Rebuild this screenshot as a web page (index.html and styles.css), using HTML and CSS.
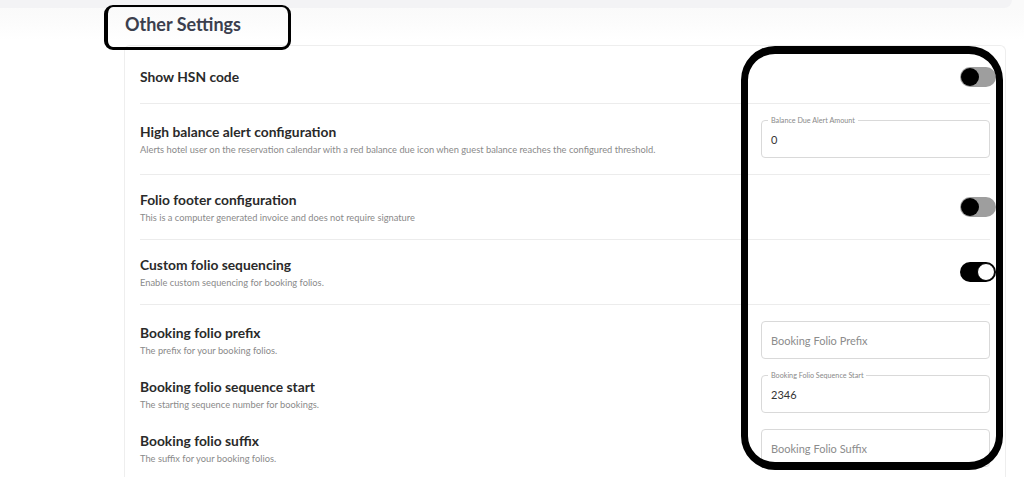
FILE: index.html
```html
<!DOCTYPE html>
<html lang="en">
<head>
<meta charset="utf-8">
<title>Other Settings</title>
<link rel="stylesheet" href="styles.css">
</head>
<body>
<div class="topbar"></div>
<main class="page">
  <h2 class="heading">Other Settings</h2>
  <section class="card">
    <div class="row row-first">
      <div class="text">
        <div class="label">Show HSN code</div>
      </div>
      <div class="switch"><span class="knob"></span></div>
    </div>
    <div class="row">
      <div class="text">
        <div class="label">High balance alert configuration</div>
        <div class="desc">Alerts hotel user on the reservation calendar with a red balance due icon when guest balance reaches the configured threshold.</div>
      </div>
      <div class="field"><span class="legend">Balance Due Alert Amount</span><span class="value">0</span></div>
    </div>
    <div class="row">
      <div class="text">
        <div class="label">Folio footer configuration</div>
        <div class="desc">This is a computer generated invoice and does not require signature</div>
      </div>
      <div class="switch"><span class="knob"></span></div>
    </div>
    <div class="row">
      <div class="text">
        <div class="label">Custom folio sequencing</div>
        <div class="desc">Enable custom sequencing for booking folios.</div>
      </div>
      <div class="switch switch-on"><span class="knob"></span></div>
    </div>
    <div class="group">
      <div class="row row-plain">
        <div class="text">
          <div class="label">Booking folio prefix</div>
          <div class="desc">The prefix for your booking folios.</div>
        </div>
        <div class="field"><span class="placeholder">Booking Folio Prefix</span></div>
      </div>
      <div class="row row-plain">
        <div class="text">
          <div class="label">Booking folio sequence start</div>
          <div class="desc">The starting sequence number for bookings.</div>
        </div>
        <div class="field"><span class="legend">Booking Folio Sequence Start</span><span class="value">2346</span></div>
      </div>
      <div class="row row-plain">
        <div class="text">
          <div class="label">Booking folio suffix</div>
          <div class="desc">The suffix for your booking folios.</div>
        </div>
        <div class="field"><span class="placeholder">Booking Folio Suffix</span></div>
      </div>
    </div>
  </section>
</main>
<div class="note note-head"></div>
<div class="note note-controls"></div>
</body>
</html>
```

FILE: styles.css
```css
* { box-sizing: border-box; }
html, body { margin: 0; padding: 0; }
body {
  font-family: Lato, "Noto Sans", sans-serif;
  background: linear-gradient(#fafafa 8px, #fcfcfc 24px, #ffffff 40px);
  color: #2a2a2a;
  height: 477px;
  overflow: hidden;
  position: relative;
}
.topbar {
  height: 8px;
  width: calc(100% - 12px);
  background: #f3f3f5;
  border-bottom-right-radius: 14px;
}
.page {
  padding: 0 18px 0 124px;
}
.heading {
  margin: 5px 0 10px 1px;
  font-size: 18px;
  line-height: 22px;
  font-weight: 700;
  color: #3b3f4e;
}
.card {
  border: 1px solid #eeeeee;
  border-bottom: 0;
  border-radius: 6px 6px 0 0;
  padding: 0 15px 40px 15px;
  background: #fff;
}
.row {
  display: flex;
  align-items: center;
  justify-content: space-between;
  padding: 16px 0;
  border-bottom: 1px solid #ececec;
}
.row-first { padding-top: 21px; }
.row-plain { border-bottom: 0; padding: 0; }
.group {
  display: flex;
  flex-direction: column;
  gap: 16px;
  padding-top: 16px;
}
.text { display: flex; flex-direction: column; }
.label {
  font-size: 13.8px;
  line-height: 18px;
  font-weight: 700;
  color: #2a2a2a;
}
.desc {
  margin-top: 3px;
  font-size: 9.3px;
  line-height: 11px;
  color: #8a8a8a;
}
.switch {
  flex: none;
  width: 36px;
  height: 20px;
  border-radius: 10px;
  background: #9e9e9e;
  display: flex;
  align-items: center;
  padding: 1px;
  margin-right: -6px;
}
.knob {
  width: 18px;
  height: 18px;
  border-radius: 50%;
  background: #000;
}
.switch-on {
  background: #000;
  justify-content: flex-end;
  padding: 1px;
}
.switch-on .knob {
  width: 18px;
  height: 18px;
  background: #fff;
  border: 1.5px solid #000;
}
.field {
  position: relative;
  flex: none;
  width: 229px;
  height: 38px;
  border: 1px solid #d9d9d9;
  border-radius: 4px;
  padding: 0 9px;
  display: flex;
  align-items: center;
  background: #fff;
}
.legend {
  position: absolute;
  top: -5px;
  left: 6px;
  padding: 0 3px;
  background: #fff;
  font-size: 7.2px;
  line-height: 9px;
  color: #8a8a8a;
}
.value {
  font-size: 11px;
  color: #333;
}
.placeholder {
  font-size: 11px;
  color: #8c8c8c;
}
.note {
  position: absolute;
  border: 0 solid #000;
  pointer-events: none;
}
.note-head {
  left: 104px;
  top: 5px;
  width: 187px;
  height: 45px;
  border-width: 2px 3px 3px 4px;
  border-radius: 9px;
}
.note-controls {
  left: 741px;
  top: 46px;
  width: 262px;
  height: 424px;
  border-width: 8px 7px 8px 7px;
  border-radius: 34px;
}
```
